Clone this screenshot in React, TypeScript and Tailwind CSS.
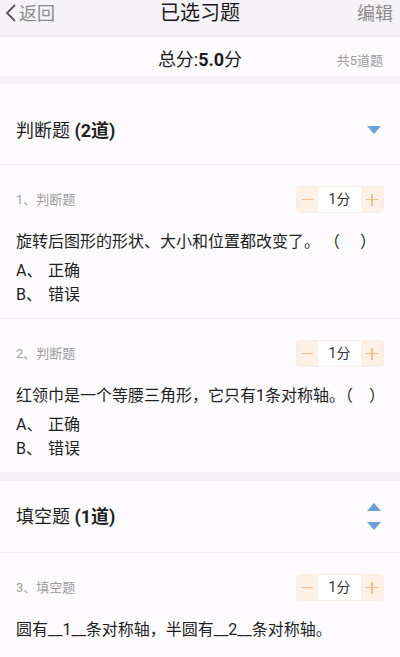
import React from 'react';

const font = "font-['Roboto','Noto_Sans_CJK_SC',sans-serif]";

const Stepper: React.FC<{ value: string }> = ({ value }) => (
  <div className="flex h-[27px] w-[88px] items-stretch overflow-hidden rounded-[4px] border border-[#f8eee6] bg-white">
    <div className="flex w-[21px] items-center justify-center bg-[#fdf0e4]">
      <div className="h-[1.5px] w-[11px] bg-[#f2c089]" />
    </div>
    <div className="flex flex-1 items-center justify-center text-[14px] text-[#333]">{value}</div>
    <div className="relative flex w-[22px] items-center justify-center bg-[#fdf0e4]">
      <div className="h-[1.5px] w-[12px] bg-[#f2c089]" />
      <div className="absolute h-[12px] w-[1.5px] bg-[#f2c089]" />
    </div>
  </div>
);

const Triangle: React.FC<{ up?: boolean }> = ({ up }) => (
  <svg width="14" height="8" viewBox="0 0 14 8">
    {up ? <path d="M7 0 L14 8 L0 8 Z" fill="#6e9fd6" /> : <path d="M0 0 L14 0 L7 8 Z" fill="#6e9fd6" />}
  </svg>
);

interface Question {
  no: number;
  type: string;
  text: string;
  options?: string[];
}

const QuestionBlock: React.FC<{ q: Question; last?: boolean }> = ({ q, last }) => (
  <div className={`px-4 pt-[21px] pb-[11px] ${last ? '' : 'border-b border-[#f1eff4]'}`}>
    <div className="flex items-center justify-between">
      <span className="text-[13px] text-[#9d9d9d]">{q.no}、{q.type}</span>
      <Stepper value="1分" />
    </div>
    <div className="mt-[17px] text-[16px] leading-[24px] text-[#1f1f1f]">{q.text}</div>
    {q.options && (
      <div className="mt-[5px]">
        {q.options.map((o, i) => (
          <div key={o} className="flex text-[16px] leading-[24px] text-[#1f1f1f]">
            <span className="w-[32px]">{i === 0 ? 'A、' : 'B、'}</span>
            <span>{o}</span>
          </div>
        ))}
      </div>
    )}
  </div>
);

export default function App() {
  return (
    <div className={`${font} h-[657px] w-[400px] overflow-hidden bg-[#fdfbfe]`}>
      <header className="grid h-[37px] grid-cols-[1fr_auto_1fr] items-start border-b-2 border-[#ebe9ef] bg-[#f5f3f8] px-[4px]">
        <div className="flex h-[26px] items-center text-[18px] text-[#8c8c8c]">
          <svg width="14" height="20" viewBox="0 0 14 20" className="mr-[1px]">
            <path d="M11 2 L3 10 L11 18" fill="none" stroke="#555" strokeWidth="1.8" />
          </svg>
          返回
        </div>
        <div className="flex h-[26px] items-center text-[20px] text-[#1a1a1a]">已选习题</div>
        <div className="flex h-[26px] items-center justify-end pr-[3px] text-[18px] text-[#8c8c8c]">编辑</div>
      </header>

      <div className="relative flex h-[39px] items-center justify-center pt-[6px]">
        <span className="text-[18px] text-[#1a1a1a]">
          总分:<span className="font-bold">5.0</span>分
        </span>
        <span className="absolute right-[17px] top-[14px] text-[13px] text-[#9b9b9b]">共5道题</span>
      </div>

      <div className="h-[8px] bg-[#f4f2f7]" />

      <div className="flex h-[81px] items-center justify-between border-b border-[#f1eff4] px-4 pt-[12px]">
        <span className="text-[18px] text-[#1f1f1f]">
          判断题 <span className="font-bold">(2道)</span>
        </span>
        <span className="mr-[3px] flex">
          <Triangle />
        </span>
      </div>

      <QuestionBlock
        q={{ no: 1, type: '判断题', text: '旋转后图形的形状、大小和位置都改变了。 （　 ）', options: ['正确', '错误'] }}
      />
      <QuestionBlock
        q={{ no: 2, type: '判断题', text: '红领巾是一个等腰三角形，它只有1条对称轴。（　）', options: ['正确', '错误'] }}
        last
      />

      <div className="h-[9px] bg-[#f4f2f7]" />

      <div className="flex h-[72px] items-center justify-between border-b border-[#f1eff4] px-4">
        <span className="text-[18px] text-[#1f1f1f]">
          填空题 <span className="font-bold">(1道)</span>
        </span>
        <span className="mr-[3px] flex flex-col gap-[11px]">
          <Triangle up />
          <Triangle />
        </span>
      </div>

      <QuestionBlock q={{ no: 3, type: '填空题', text: '圆有__1__条对称轴，半圆有__2__条对称轴。' }} last />
    </div>
  );
}
